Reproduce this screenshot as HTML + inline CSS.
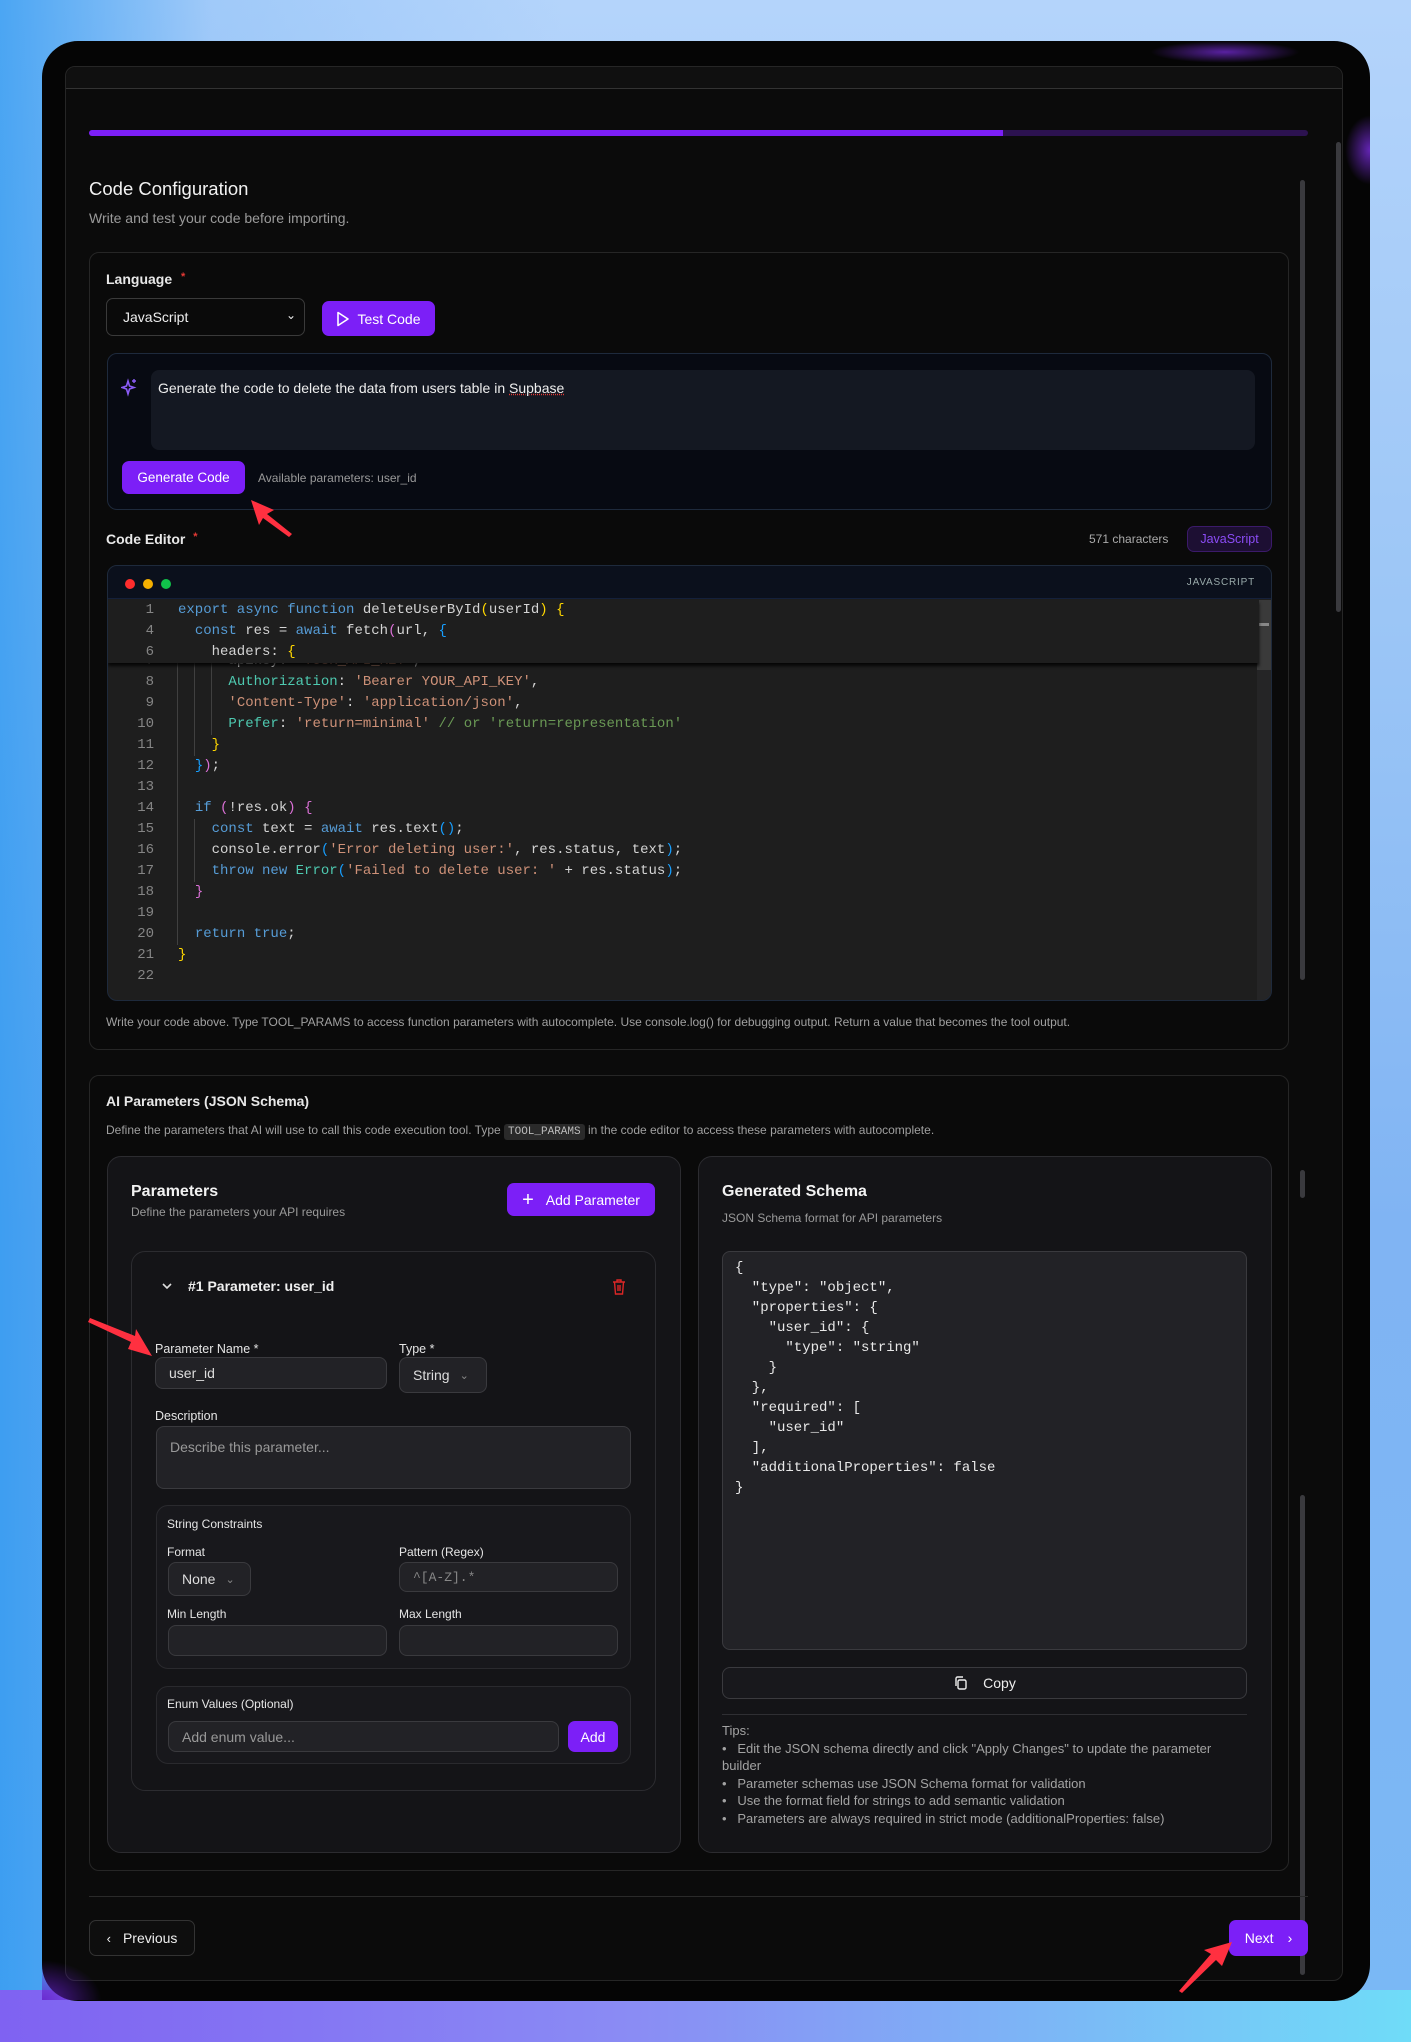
<!DOCTYPE html>
<html><head><meta charset="utf-8"><style>
*{box-sizing:border-box;margin:0;padding:0}
body{width:1411px;height:2042px;overflow:hidden;position:relative;font-family:"Liberation Sans",sans-serif;color:#e5e5e5;
background:linear-gradient(180deg,#b4d4fb 0%,#9cc6f6 30%,#80b4f3 60%,#7ab8f5 100%)}
.bgl{position:absolute;left:0;top:0;width:1411px;height:2042px;background:linear-gradient(90deg,rgba(40,150,240,.75) 0%,rgba(80,160,240,.2) 15%,rgba(0,0,0,0) 40%)}
.bgb{position:absolute;left:0;top:1990px;width:1411px;height:52px;background:linear-gradient(90deg,#7f62f2 0%,#8a8cf4 45%,#6fdcf8 100%)}
.a{position:absolute}
.frame{left:42px;top:41px;width:1328px;height:1960px;background:#050505;border-radius:36px}
.panel{left:65px;top:66px;width:1278px;height:1915px;background:#0b0b0b;border:1px solid #262626;border-radius:10px}
.card{border:1px solid #262626;border-radius:10px;background:#0a0a0a}
.lbl{font-size:14px;font-weight:bold;color:#e8e8e8}
.btn{background:#7c1ff7;color:#fff;border-radius:7px;font-size:14px;display:flex;align-items:center;justify-content:center}
.mono{font-family:"Liberation Mono",monospace}
.code{font-family:"Liberation Mono",monospace;font-size:14px;line-height:21px;color:#d4d4d4}
.code>div{display:flex;height:21px}
.cl{white-space:pre;padding-left:24px}
.ln{color:#858585;text-align:right;width:46px;white-space:pre}
.k{color:#569cd6}.s{color:#ce9178}.p{color:#4ec9b0}.c{color:#6a9955}.y{color:#ffd700}.m{color:#da70d6}.b{color:#179fff}
.sub{background:#18181c;border:1px solid #2a2a2e;border-radius:12px}
.inp{background:#222226;border:1px solid #3a3a3e;border-radius:8px;font-size:14px;color:#ddd;padding-left:13px;display:flex;align-items:center}
.sl{font-size:12.5px;color:#e5e5e5}
.tip{font-size:13px;color:#a3a3a3;line-height:17.5px}
.g{position:absolute;width:1px;background:#404040}
</style></head><body>
<div class="bgl"></div><div class="bgb"></div>
<div class="a frame"></div>
<div class="a" style="left:1150px;top:41px;width:150px;height:22px;background:radial-gradient(ellipse at center,rgba(110,40,200,.8),rgba(0,0,0,0) 70%)"></div>
<div class="a" style="left:1345px;top:115px;width:25px;height:70px;background:radial-gradient(ellipse at right,rgba(110,40,200,.9),rgba(0,0,0,0) 70%)"></div>
<div class="a panel"></div>
<div class="a" style="left:66px;top:67px;width:1276px;height:22px;background:#101010;border-bottom:1px solid #333;border-radius:10px 10px 0 0"></div>
<div class="a" style="left:89px;top:130px;width:1219px;height:6px;background:#2c1250;border-radius:3px"></div>
<div class="a" style="left:89px;top:130px;width:914px;height:6px;background:#7c1ff7;border-radius:3px 0 0 3px"></div>
<div class="a" style="left:1336px;top:142px;width:5px;height:470px;background:#3a3a3e;border-radius:3px"></div>
<div class="a" style="left:1300px;top:180px;width:5px;height:800px;background:#3a3a3e;border-radius:3px"></div>
<div class="a" style="left:1300px;top:1170px;width:5px;height:28px;background:#3a3a3e;border-radius:3px"></div>
<div class="a" style="left:1300px;top:1495px;width:5px;height:480px;background:#3a3a3e;border-radius:3px"></div>

<div class="a" style="left:89px;top:178px;font-size:18.5px;color:#f2f2f2">Code Configuration</div>
<div class="a" style="left:89px;top:210px;font-size:14px;color:#9a9a9a">Write and test your code before importing.</div>

<div class="a card" style="left:89px;top:252px;width:1200px;height:798px"></div>
<div class="a lbl" style="left:106px;top:271px">Language <span style="color:#e53935;font-size:11px;vertical-align:top;margin-left:5px">*</span></div>
<div class="a" style="left:106px;top:298px;width:199px;height:38px;border:1px solid #3a3a3a;border-radius:7px;background:#0a0a0a;font-size:14px;color:#eee;padding:10px 0 0 16px">JavaScript<span style="position:absolute;right:8px;top:9px;font-size:12px">&#8964;</span></div>
<div class="a btn" style="left:322px;top:301px;width:113px;height:35px"><svg width="14" height="16" viewBox="0 0 14 16" style="margin-right:7px"><path d="M2 1.5 L12 8 L2 14.5 Z" fill="none" stroke="#fff" stroke-width="1.6" stroke-linejoin="round"/></svg>Test Code</div>

<div class="a" style="left:107px;top:353px;width:1165px;height:157px;border:1px solid #1e2a3c;border-radius:10px;background:#070a12"></div>
<svg class="a" style="left:121px;top:378px" width="18" height="20" viewBox="0 0 18 20"><path d="M7 3 L8.5 8 L13 9.5 L8.5 11 L7 16 L5.5 11 L1 9.5 L5.5 8 Z" fill="none" stroke="#8b5cf6" stroke-width="1.6"/><path d="M13 1v4M11 3h4" stroke="#8b5cf6" stroke-width="1.4"/></svg>
<div class="a" style="left:151px;top:370px;width:1104px;height:80px;background:#141822;border-radius:8px;font-size:14px;color:#eee;padding:10px 7px">Generate the code to delete the data from users table in <span style="text-decoration:underline dotted #e53935">Supbase</span></div>
<div class="a btn" style="left:122px;top:461px;width:123px;height:33px;font-size:13.5px">Generate Code</div>
<div class="a" style="left:258px;top:471px;font-size:12px;color:#999">Available parameters: user_id</div>

<div class="a lbl" style="left:106px;top:531px">Code Editor <span style="color:#e53935;font-size:11px;vertical-align:top;margin-left:4px">*</span></div>
<div class="a" style="left:1089px;top:532px;font-size:12px;color:#aaa">571 characters</div>
<div class="a" style="left:1187px;top:526px;width:85px;height:26px;border:1px solid #3b1a6a;background:#1d0f33;border-radius:7px;color:#8b4cf6;font-size:12.5px;text-align:center;line-height:24px">JavaScript</div>

<div class="a" style="left:107px;top:565px;width:1165px;height:436px;border:1px solid #1e2a3c;border-radius:10px;background:#1e1e1e;overflow:hidden">
 <div style="height:33px;background:#0b101c;position:relative;border-bottom:1px solid #15203a">
  <div class="a" style="left:17px;top:13px;width:10px;height:10px;border-radius:5px;background:#ff2d2d"></div>
  <div class="a" style="left:35px;top:13px;width:10px;height:10px;border-radius:5px;background:#f5b000"></div>
  <div class="a" style="left:53px;top:13px;width:10px;height:10px;border-radius:5px;background:#10c24a"></div>
  <div class="a" style="right:16px;top:11px;font-size:10px;letter-spacing:.8px;color:#9aa">JAVASCRIPT</div>
 </div>
 <div class="a" style="right:0;top:34px;width:14px;height:402px;background:#252526"></div>
 <div class="a" style="right:0;top:34px;width:14px;height:70px;background:#3a3a3a"></div>
 <div class="a" style="right:2px;top:57px;width:12px;height:3px;background:#888"></div>
 <div class="g" style="left:69px;top:85px;height:294px"></div>
 <div class="g" style="left:86px;top:85px;height:105px"></div>
 <div class="g" style="left:86px;top:253px;height:63px"></div>
 <div class="g" style="left:103px;top:85px;height:84px"></div>
 <div class="a code" style="left:0;top:85px">
  <div><div class="ln">7</div><div class="cl">      apikey: <span class="s">'YOUR_API_KEY'</span>,</div></div>
  <div><div class="ln">8</div><div class="cl">      <span class="p">Authorization</span>: <span class="s">'Bearer YOUR_API_KEY'</span>,</div></div>
  <div><div class="ln">9</div><div class="cl">      <span class="s">'Content-Type'</span>: <span class="s">'application/json'</span>,</div></div>
  <div><div class="ln">10</div><div class="cl">      <span class="p">Prefer</span>: <span class="s">'return=minimal'</span> <span class="c">// or 'return=representation'</span></div></div>
  <div><div class="ln">11</div><div class="cl">    <span class="y">}</span></div></div>
  <div><div class="ln">12</div><div class="cl">  <span class="b">}</span><span class="m">)</span>;</div></div>
  <div><div class="ln">13</div><div class="cl"> </div></div>
  <div><div class="ln">14</div><div class="cl">  <span class="k">if</span> <span class="m">(</span>!res.ok<span class="m">)</span> <span class="m">{</span></div></div>
  <div><div class="ln">15</div><div class="cl">    <span class="k">const</span> text = <span class="k">await</span> res.text<span class="b">()</span>;</div></div>
  <div><div class="ln">16</div><div class="cl">    console.error<span class="b">(</span><span class="s">'Error deleting user:'</span>, res.status, text<span class="b">)</span>;</div></div>
  <div><div class="ln">17</div><div class="cl">    <span class="k">throw new</span> <span class="p">Error</span><span class="b">(</span><span class="s">'Failed to delete user: '</span> + res.status<span class="b">)</span>;</div></div>
  <div><div class="ln">18</div><div class="cl">  <span class="m">}</span></div></div>
  <div><div class="ln">19</div><div class="cl"> </div></div>
  <div><div class="ln">20</div><div class="cl">  <span class="k">return true</span>;</div></div>
  <div><div class="ln">21</div><div class="cl"><span class="y">}</span></div></div>
  <div><div class="ln">22</div><div class="cl"> </div></div>
 </div>
 <div class="a code" style="left:0;top:34px;width:1151px;height:63px;background:#1e1e1e;box-shadow:0 3px 3px rgba(0,0,0,.8)">
  <div><div class="ln">1</div><div class="cl"><span class="k">export async function</span> deleteUserById<span class="y">(</span>userId<span class="y">)</span> <span class="y">{</span></div></div>
  <div><div class="ln">4</div><div class="cl">  <span class="k">const</span> res = <span class="k">await</span> fetch<span class="m">(</span>url, <span class="b">{</span></div></div>
  <div><div class="ln">6</div><div class="cl">    headers: <span class="y">{</span></div></div>
 </div>
</div>
<div class="a" style="left:106px;top:1015px;font-size:12px;color:#a0a0a0">Write your code above. Type TOOL_PARAMS to access function parameters with autocomplete. Use console.log() for debugging output. Return a value that becomes the tool output.</div>

<div class="a card" style="left:89px;top:1075px;width:1200px;height:796px"></div>
<div class="a lbl" style="left:106px;top:1093px;font-size:14px">AI Parameters (JSON Schema)</div>
<div class="a" style="left:106px;top:1123px;font-size:12px;color:#a0a0a0">Define the parameters that AI will use to call this code execution tool. Type <span class="mono" style="background:#2a2a2a;padding:2px 4px;border-radius:3px;font-size:11px;color:#bbb">TOOL_PARAMS</span> in the code editor to access these parameters with autocomplete.</div>

<div class="a" style="left:107px;top:1156px;width:574px;height:697px;background:#141417;border:1px solid #2c2c30;border-radius:14px"></div>
<div class="a" style="left:698px;top:1156px;width:574px;height:697px;background:#141417;border:1px solid #2c2c30;border-radius:14px"></div>

<div class="a" style="left:131px;top:1183px;font-size:16px;color:#f2f2f2;font-weight:bold">Parameters</div>
<div class="a" style="left:131px;top:1205px;font-size:12px;color:#9a9a9a">Define the parameters your API requires</div>
<div class="a btn" style="left:507px;top:1183px;width:148px;height:33px"><span style="font-size:20px;font-weight:300;margin-right:12px;line-height:1">+</span>Add Parameter</div>

<div class="a" style="left:131px;top:1251px;width:525px;height:540px;border:1px solid #2c2c30;border-radius:14px;background:#141417"></div>
<svg class="a" style="left:160px;top:1281px" width="14" height="10" viewBox="0 0 14 10"><path d="M3 3l4 4 4-4" fill="none" stroke="#ddd" stroke-width="1.6"/></svg>
<div class="a" style="left:188px;top:1278px;font-size:14px;font-weight:bold;color:#f0f0f0">#1 Parameter: user_id</div>
<svg class="a" style="left:611px;top:1278px" width="16" height="18" viewBox="0 0 16 18"><path d="M2 4h12M6 4V2h4v2M3.5 4l1 12h7l1-12M7 7v6M9 7v6" fill="none" stroke="#dc2626" stroke-width="1.4"/></svg>

<div class="a sl" style="left:155px;top:1342px">Parameter Name *</div>
<div class="a inp" style="left:155px;top:1357px;width:232px;height:32px">user_id</div>
<div class="a sl" style="left:399px;top:1342px">Type *</div>
<div class="a inp" style="left:399px;top:1357px;width:88px;height:36px">String<span style="color:#888;font-size:11px;margin-left:10px">&#8964;</span></div>
<div class="a sl" style="left:155px;top:1409px">Description</div>
<div class="a inp" style="left:156px;top:1426px;width:475px;height:63px;align-items:flex-start;padding-top:12px;color:#999">Describe this parameter...</div>

<div class="a sub" style="left:156px;top:1505px;width:475px;height:164px"></div>
<div class="a sl" style="left:167px;top:1517px;font-size:12px">String Constraints</div>
<div class="a sl" style="left:167px;top:1545px;font-size:12px">Format</div>
<div class="a inp" style="left:168px;top:1562px;width:83px;height:34px">None<span style="color:#888;font-size:11px;margin-left:10px">&#8964;</span></div>
<div class="a sl" style="left:399px;top:1545px;font-size:12px">Pattern (Regex)</div>
<div class="a inp mono" style="left:399px;top:1562px;width:219px;height:30px;color:#888;font-size:13px">^[A-Z].*</div>
<div class="a sl" style="left:167px;top:1607px;font-size:12px">Min Length</div>
<div class="a inp" style="left:168px;top:1625px;width:219px;height:31px"></div>
<div class="a sl" style="left:399px;top:1607px;font-size:12px">Max Length</div>
<div class="a inp" style="left:399px;top:1625px;width:219px;height:31px"></div>

<div class="a sub" style="left:156px;top:1686px;width:475px;height:78px"></div>
<div class="a sl" style="left:167px;top:1697px;font-size:12px">Enum Values (Optional)</div>
<div class="a inp" style="left:168px;top:1721px;width:391px;height:31px;color:#999">Add enum value...</div>
<div class="a btn" style="left:568px;top:1721px;width:50px;height:31px">Add</div>

<div class="a" style="left:722px;top:1183px;font-size:16px;color:#f2f2f2;font-weight:bold">Generated Schema</div>
<div class="a" style="left:722px;top:1211px;font-size:12px;color:#9a9a9a">JSON Schema format for API parameters</div>
<div class="a mono" style="left:722px;top:1251px;width:525px;height:399px;background:#222226;border:1px solid #3a3a3e;border-radius:8px;font-size:14px;line-height:20px;white-space:pre;color:#e8e8e8;padding:6px 12px">{
  "type": "object",
  "properties": {
    "user_id": {
      "type": "string"
    }
  },
  "required": [
    "user_id"
  ],
  "additionalProperties": false
}</div>
<div class="a" style="left:722px;top:1667px;width:525px;height:32px;border:1px solid #3a3a3e;border-radius:8px;background:#18181c;display:flex;align-items:center;justify-content:center;font-size:14px;color:#eee"><svg width="16" height="16" viewBox="0 0 16 16" style="margin-right:14px"><rect x="5" y="5" width="8" height="9" rx="1.5" fill="none" stroke="#eee" stroke-width="1.4"/><path d="M3 11V3.5A1.5 1.5 0 0 1 4.5 2H10" fill="none" stroke="#eee" stroke-width="1.4"/></svg>Copy</div>
<div class="a" style="left:722px;top:1714px;width:525px;height:1px;background:#2f2f33"></div>
<div class="a tip" style="left:722px;top:1722px;width:495px">Tips:<br>•&nbsp;&nbsp; Edit the JSON schema directly and click "Apply Changes" to update the parameter builder<br>•&nbsp;&nbsp; Parameter schemas use JSON Schema format for validation<br>•&nbsp;&nbsp; Use the format field for strings to add semantic validation<br>•&nbsp;&nbsp; Parameters are always required in strict mode (additionalProperties: false)</div>

<div class="a" style="left:89px;top:1896px;width:1219px;height:1px;background:#2a2a2a"></div>
<div class="a" style="left:89px;top:1920px;width:106px;height:36px;border:1px solid #333;border-radius:7px;background:#0e0e0e;display:flex;align-items:center;justify-content:center;font-size:14px;color:#eee"><span style="margin-right:12px;font-size:13px">&#8249;</span>Previous</div>
<div class="a btn" style="left:1229px;top:1920px;width:79px;height:36px">Next<span style="margin-left:14px">&#8250;</span></div>
<div class="a" style="left:42px;top:1960px;width:60px;height:40px;background:radial-gradient(ellipse at left bottom,rgba(100,30,200,.8),rgba(0,0,0,0) 70%)"></div>

<svg class="a" style="left:0;top:0" width="1411" height="2042">
<g fill="#ff3040">
<path d="M251 500 L274 510 L267 514 L292 534 L289 537 L263 518 L259 525 Z"/>
<path d="M152 1356 L128 1349 L131 1342 L88 1322 L90 1318 L135 1336 L136 1329 Z"/>
<path d="M1232 1942 L1222 1966 L1216 1960 L1182 1993 L1179 1991 L1211 1954 L1204 1950 Z"/>
</g></svg>
</body></html>
